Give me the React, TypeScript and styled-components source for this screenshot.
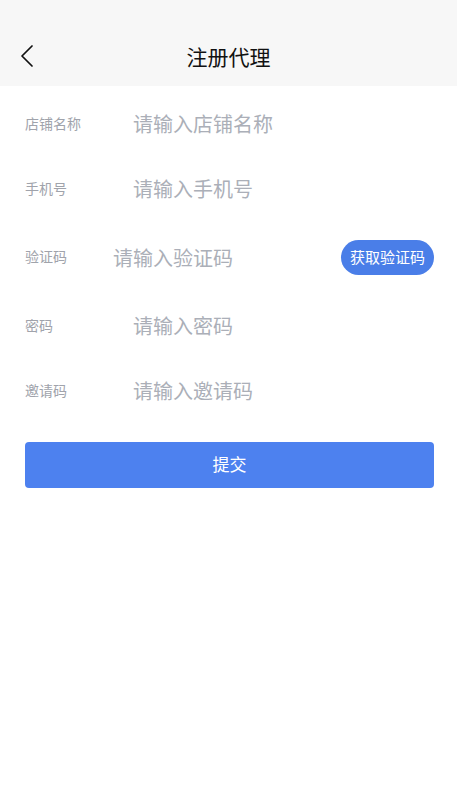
import React from 'react';
import styled, {createGlobalStyle} from 'styled-components';

const GlobalStyle = createGlobalStyle`
    html, body {
      margin: 0;
      padding: 0;
      background: #ffffff;
      font-family: "Noto Sans CJK SC", "Noto Sans", sans-serif;
    }
`;

const Page = styled.div`
    width: 457px;
    min-height: 812px;
    background: #ffffff;
`;

const Header = styled.div`
    background: #f7f7f7;
    padding-top: 27px;
    height: 59px;
`;

const NavBar = styled.div`
    height: 58px;
    display: grid;
    grid-template-columns: 60px 1fr 60px;
    align-items: center;
`;

const BackButton = styled.button`
    border: none;
    background: transparent;
    padding: 0 0 0 19px;
    display: flex;
    align-items: center;
    height: 100%;
    cursor: pointer;
`;

const Title = styled.h1`
    margin: 0;
    text-align: center;
    font-size: 21px;
    font-weight: 400;
    color: #111111;
`;

const Form = styled.form`
    padding: 5px 23px 0 25px;
    display: flex;
    flex-direction: column;
`;

const Row = styled.div<{ $height: number }>`
    height: ${p => p.$height}px;
    display: flex;
    align-items: center;
`;

const Label = styled.label<{ $width: number }>`
    flex: 0 0 ${p => p.$width}px;
    font-size: 14px;
    color: #a0a3ab;
    margin-top: -2px;
`;

const Input = styled.input`
    flex: 1;
    min-width: 0;
    border: none;
    outline: none;
    padding: 0;
    background: transparent;
    font-family: inherit;
    font-size: 20px;
    color: #333333;

    &::placeholder {
      color: #abafb8;
    }
`;

const CodeButton = styled.button`
    flex: 0 0 auto;
    height: 35px;
    padding: 0 9px 2px;
    border: none;
    border-radius: 18px;
    background: #4a7ee8;
    color: #ffffff;
    font-family: inherit;
    font-size: 15px;
`;

const SubmitButton = styled.button`
    margin-top: 19px;
    height: 46px;
    padding: 0 0 3px;
    border: none;
    border-radius: 4px;
    background: #4d81ef;
    color: #ffffff;
    font-family: inherit;
    font-size: 17px;
`;

const fields = [
    {label: '店铺名称', placeholder: '请输入店铺名称'},
    {label: '手机号', placeholder: '请输入手机号'},
];

const tailFields = [
    {label: '密码', placeholder: '请输入密码', type: 'password'},
    {label: '邀请码', placeholder: '请输入邀请码'},
];

const App = () => {
    return (
        <Page>
            <GlobalStyle/>
            <Header>
                <NavBar>
                    <BackButton type="button">
                        <svg width="16" height="22" viewBox="0 0 16 22">
                            <path d="M13 1 L3 11 L13 21" fill="none" stroke="#111" strokeWidth="1.7" strokeLinecap="round" strokeLinejoin="round"/>
                        </svg>
                    </BackButton>
                    <Title>注册代理</Title>
                    <div/>
                </NavBar>
            </Header>
            <Form onSubmit={e => e.preventDefault()}>
                {fields.map(f => (
                    <Row $height={65} key={f.label}>
                        <Label $width={108}>{f.label}</Label>
                        <Input placeholder={f.placeholder}/>
                    </Row>
                ))}
                <Row $height={72}>
                    <Label $width={88}>验证码</Label>
                    <Input placeholder="请输入验证码"/>
                    <CodeButton type="button">获取验证码</CodeButton>
                </Row>
                {tailFields.map(f => (
                    <Row $height={65} key={f.label}>
                        <Label $width={108}>{f.label}</Label>
                        <Input type={f.type || 'text'} placeholder={f.placeholder}/>
                    </Row>
                ))}
                <SubmitButton type="submit">提交</SubmitButton>
            </Form>
        </Page>
    );
};

export default App;
